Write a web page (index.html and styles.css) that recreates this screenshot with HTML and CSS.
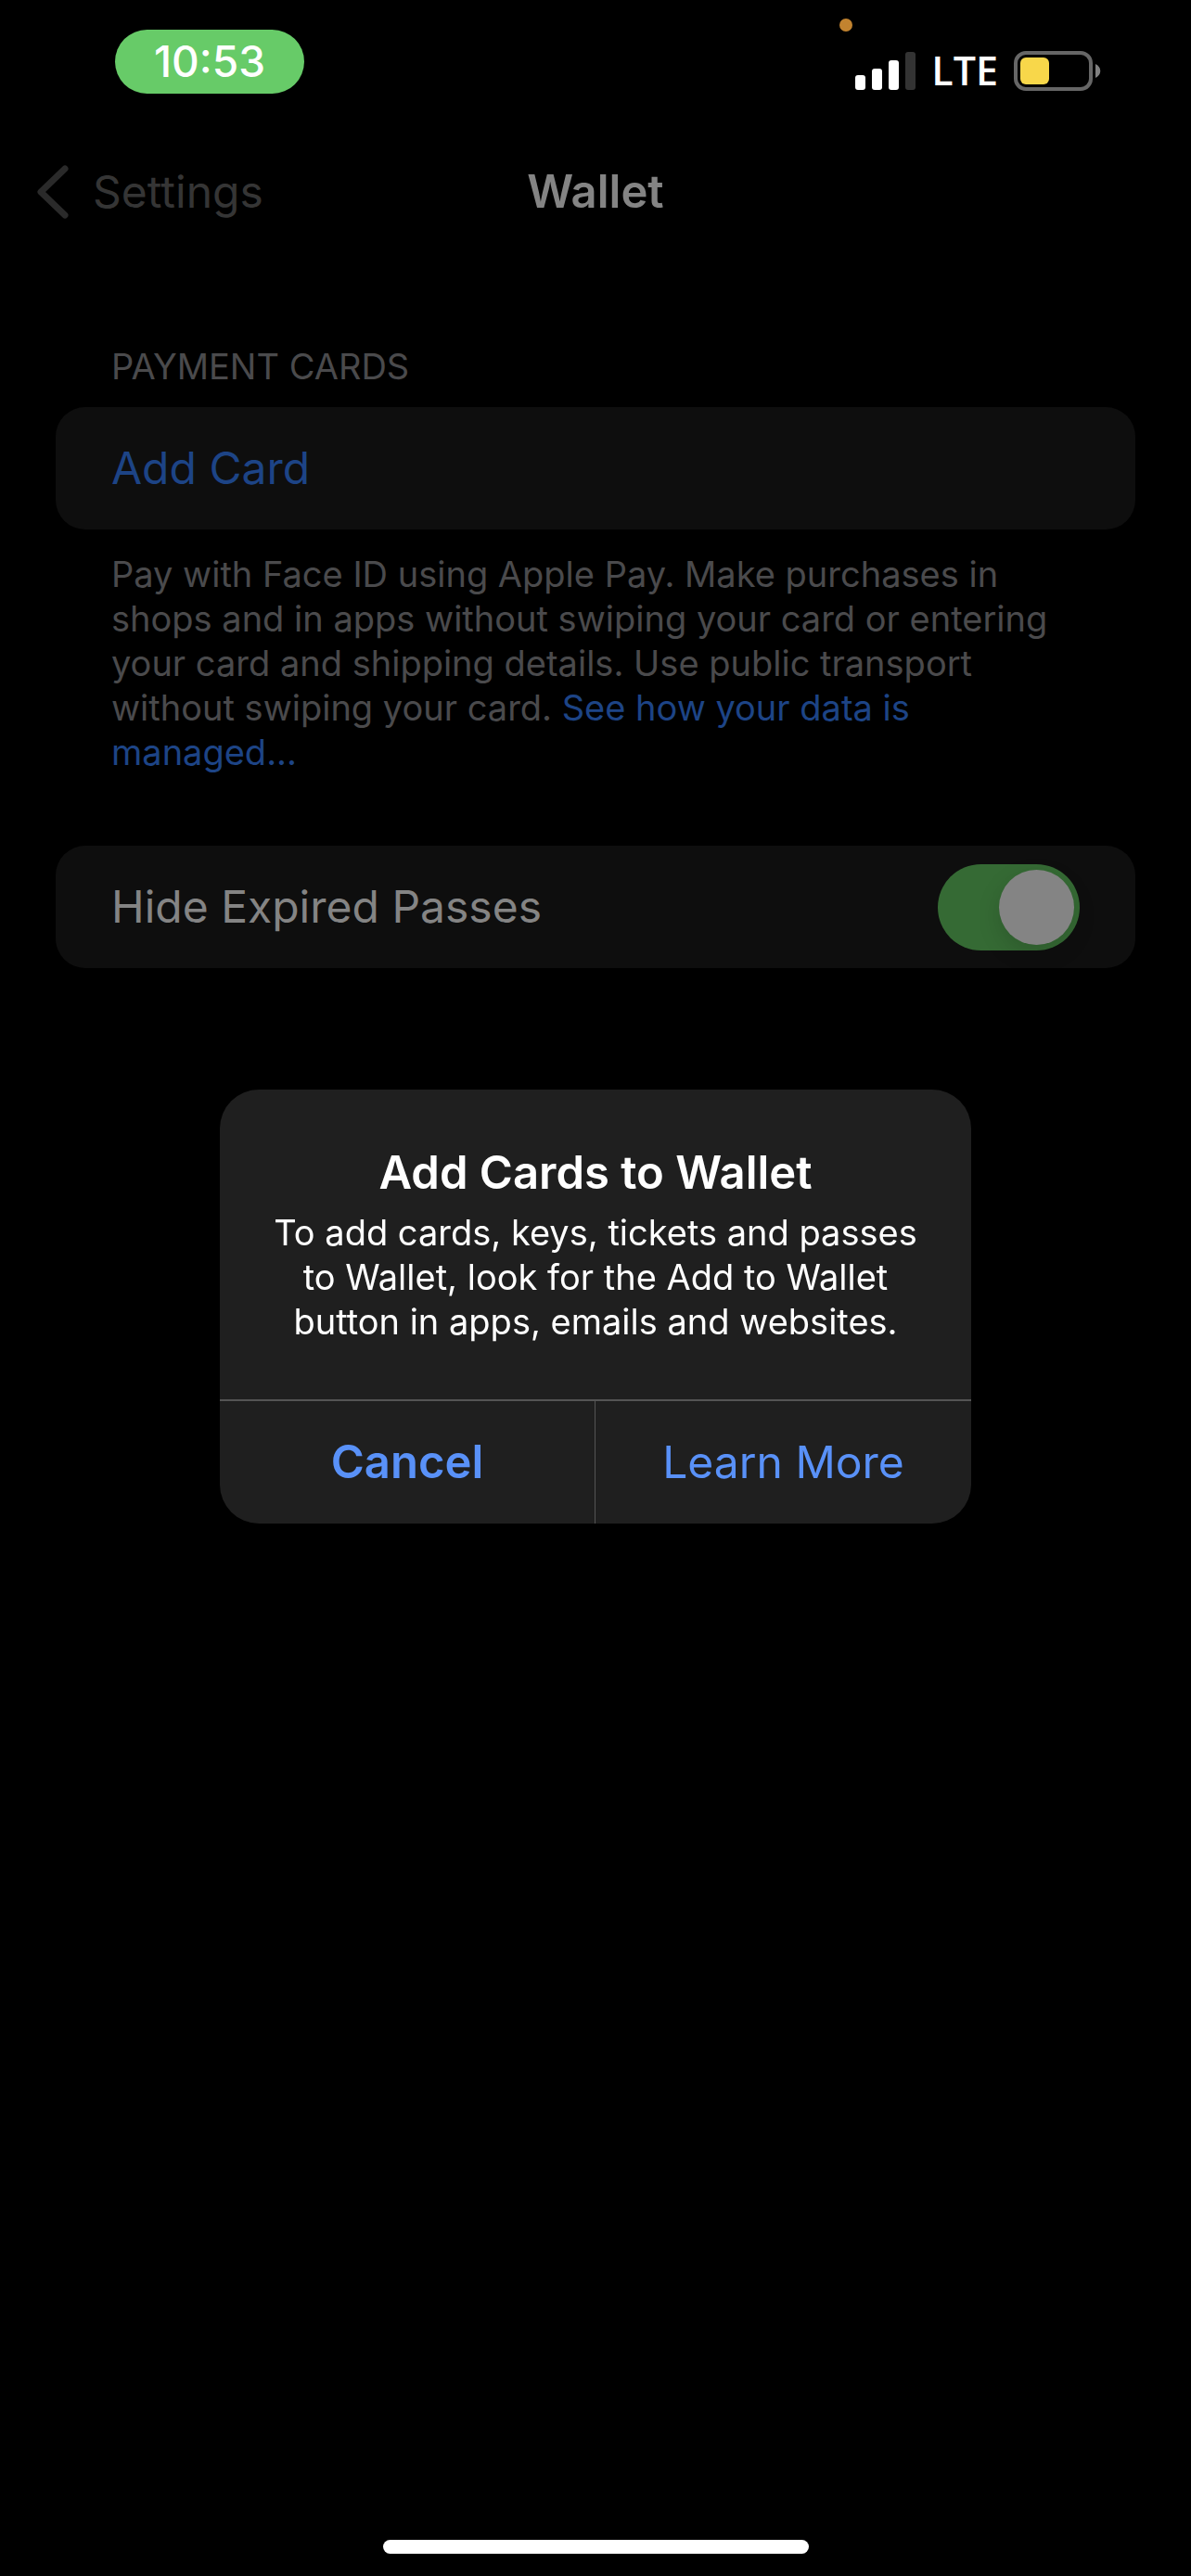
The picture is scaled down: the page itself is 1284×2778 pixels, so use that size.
FILE: index.html
```html
<!DOCTYPE html>
<html lang="en">
<head>
    <meta charset="UTF-8">
    <meta name="viewport" content="width=device-width, initial-scale=1.0">
    <title>Wallet</title>
    <link rel="stylesheet" href="styles.css">
</head>
<body>
    <header class="statusBar">
      <span class="time">10:53</span>
      <span class="micDot"></span>
      <div class="statusIcons">
        <svg class="signal" width="65" height="41" viewBox="0 0 65 41">
          <rect x="0" y="25" width="11" height="16" rx="3" fill="#fff" />
          <rect x="18" y="18" width="11" height="23" rx="3" fill="#fff" />
          <rect x="36" y="9" width="11" height="32" rx="3" fill="#fff" />
          <rect x="54" y="0" width="11" height="41" rx="3" fill="#333" />
        </svg>
        <span class="network">LTE</span>
        <svg class="battery" width="94" height="43" viewBox="0 0 94 43">
          <rect x="2" y="2" width="81" height="39" rx="11" fill="none" stroke="#666" stroke-width="4" />
          <rect x="7" y="7" width="31" height="29" rx="6" fill="#f8d74a" />
          <path d="M88 14 C95 17 95 26 88 29 Z" fill="#808080" />
        </svg>
      </div>
    </header>

    <nav class="navBar">
      <a class="back" href="#">
        <svg width="34" height="58" viewBox="0 0 34 58">
          <path d="M30 4 L4 29 L30 54" fill="none" stroke="#2a2a2a" stroke-width="7" stroke-linecap="round" stroke-linejoin="round" />
        </svg>
        <span>Settings</span>
      </a>
      <h1>Wallet</h1>
    </nav>

    <main>
      <section>
        <h2>PAYMENT CARDS</h2>
        <button class="row addCard" type="button">Add Card</button>
        <p class="note">Pay with Face ID using Apple Pay. Make purchases in shops and in apps without swiping your card or entering your card and shipping details. Use public transport without swiping your card. <a href="#">See how your data is managed...</a></p>
      </section>
      <div class="row">
        <label for="hideExpired">Hide Expired Passes</label>
        <input class="toggle" id="hideExpired" type="checkbox" role="switch" checked>
      </div>
    </main>

    <div class="overlay">
      <div class="alert" role="alertdialog" aria-labelledby="alertTitle" aria-describedby="alertText">
        <div class="alertBody">
          <h2 id="alertTitle">Add Cards to Wallet</h2>
          <p id="alertText">To add cards, keys, tickets and passes to Wallet, look for the Add to Wallet button in apps, emails and websites.</p>
        </div>
        <div class="alertButtons">
          <button class="cancel" type="button">Cancel</button>
          <button type="button">Learn More</button>
        </div>
      </div>
    </div>

    <div class="homeBar"></div>
</body>
</html>
```
FILE: styles.css
```css
* {
    box-sizing: border-box;
}
body {
    margin: 0;
    min-height: 100vh;
    display: flex;
    flex-direction: column;
    background-color: #000;
    color: #848484;
    font-family: Inter, Roboto, sans-serif;
    font-size: 48px;
    line-height: 60px;
}
h1, h2, p {
    margin: 0;
}
a {
    text-decoration: none;
}
button {
    font: inherit;
    border: none;
    background: none;
    padding: 0;
}

/* status bar */
.statusBar {
    position: relative;
    display: flex;
    justify-content: space-between;
    align-items: flex-start;
    padding: 32px 97px 0 124px;
    color: #fff;
}
.time {
    width: 204px;
    height: 69px;
    line-height: 69px;
    border-radius: 35px;
    background-color: #67cb68;
    text-align: center;
    font-size: 46px;
    font-weight: 500;
}
.micDot {
    position: absolute;
    top: 20px;
    right: 365px;
    width: 14px;
    height: 14px;
    border-radius: 50%;
    background-color: #c2832f;
}
.statusIcons {
    display: flex;
    align-items: center;
    gap: 17px;
    padding-top: 14px;
}
.network {
    font-family: "Open Sans", "Noto Sans", sans-serif;
    font-size: 43px;
    font-weight: 600;
}

/* navigation bar */
.navBar {
    display: grid;
    grid-template-columns: 1fr auto 1fr;
    align-items: center;
    padding: 71px 40px 0;
}
.back {
    display: flex;
    align-items: center;
    gap: 26px;
    color: #353535;
}
h1 {
    font-size: 49px;
    font-weight: 600;
}

/* settings list */
main {
    display: flex;
    flex-direction: column;
    gap: 77px;
    padding: 134px 60px 0;
}
main h2 {
    padding: 0 60px;
    margin-bottom: 20px;
    font-size: 38px;
    font-weight: 400;
    line-height: 48px;
    color: #4a4a4c;
}
.row {
    display: flex;
    justify-content: space-between;
    align-items: center;
    width: 100%;
    height: 132px;
    padding: 0 60px;
    border-radius: 32px;
    background-color: #0e0e0e;
}
.addCard {
    color: #1d4486;
}
.note {
    padding: 24px 60px 0;
    font-size: 38px;
    line-height: 48px;
    color: #4a4a4c;
}
.note a {
    color: #1d4486;
}
.toggle {
    appearance: none;
    width: 153px;
    height: 93px;
    margin: 0;
    padding: 6px;
    border-radius: 47px;
    background-color: #333;
}
.toggle::before {
    content: "";
    display: block;
    width: 81px;
    height: 81px;
    border-radius: 50%;
    background-color: #848484;
    box-shadow: 0 9px 24px rgba(0, 0, 0, 0.15);
}
.toggle:checked {
    background-color: #356a34;
}
.toggle:checked::before {
    margin-left: auto;
}

/* alert */
.overlay {
    position: fixed;
    inset: 0;
    display: flex;
    align-items: center;
    justify-content: center;
    padding-top: 39px;
}
.alert {
    width: 810px;
    border-radius: 42px;
    background-color: #1f1f1f;
    color: #fff;
    overflow: hidden;
}
.alertBody {
    padding: 60px 48px;
    text-align: center;
}
.alertBody h2 {
    font-size: 49px;
    font-weight: 600;
}
.alertBody p {
    padding-top: 10px;
    font-size: 38px;
    line-height: 48px;
}
.alertButtons {
    display: grid;
    grid-template-columns: 1fr 1fr;
    border-top: 2px solid #545454;
}
.alertButtons button {
    height: 132px;
    color: #5991f8;
}
.alertButtons .cancel {
    border-right: 1px solid #545454;
    font-size: 49px;
    font-weight: 600;
}

.homeBar {
    width: 459px;
    height: 15px;
    margin: auto auto 24px;
    border-radius: 8px;
    background-color: #fff;
}
```
